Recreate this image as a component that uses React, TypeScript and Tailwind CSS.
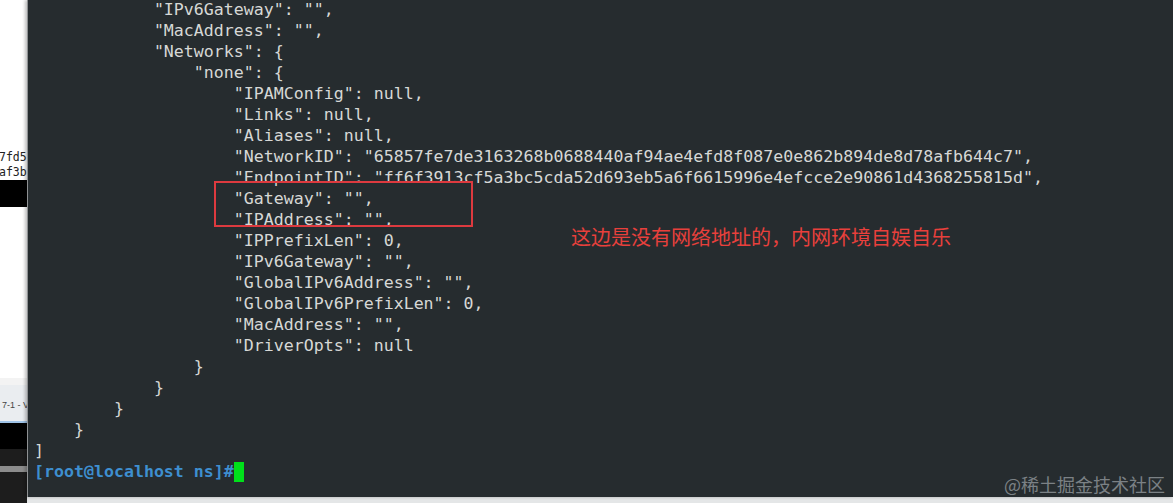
import React from "react";

const lines: string[] = [
  '            "IPv6Gateway": "",',
  '            "MacAddress": "",',
  '            "Networks": {',
  '                "none": {',
  '                    "IPAMConfig": null,',
  '                    "Links": null,',
  '                    "Aliases": null,',
  '                    "NetworkID": "65857fe7de3163268b0688440af94ae4efd8f087e0e862b894de8d78afb644c7",',
  '                    "EndpointID": "ff6f3913cf5a3bc5cda52d693eb5a6f6615996e4efcce2e90861d4368255815d",',
  '                    "Gateway": "",',
  '                    "IPAddress": "",',
  '                    "IPPrefixLen": 0,',
  '                    "IPv6Gateway": "",',
  '                    "GlobalIPv6Address": "",',
  '                    "GlobalIPv6PrefixLen": 0,',
  '                    "MacAddress": "",',
  '                    "DriverOpts": null',
  "                }",
  "            }",
  "        }",
  "    }",
  "]",
];

export default function App() {
  return (
    <div className="flex w-[1173px] h-[503px] overflow-hidden bg-white">
      {/* left strip: neighbouring window fragments */}
      <div className="flex flex-col w-[27px] shrink-0 overflow-hidden">
        <div className="h-[150px] bg-white" />
        <div className="h-[30px] bg-white flex flex-col justify-start overflow-hidden">
          <div className="whitespace-pre text-[11.5px] leading-[15px] text-[#222] [font-family:'DejaVu_Sans_Mono',monospace] -ml-[1px]">
            7fd5
          </div>
          <div className="whitespace-pre text-[11.5px] leading-[15px] text-[#222] [font-family:'DejaVu_Sans_Mono',monospace] -ml-[1px]">
            af3b
          </div>
        </div>
        <div className="h-[27px] bg-black" />
        <div className="h-[171px] bg-white" />
        <div className="h-[7px] bg-[#f3f3f3]" />
        <div className="h-[36px] bg-[#eaedf0] flex items-center overflow-hidden">
          <span className="whitespace-pre text-[9px] text-[#444] [font-family:'Liberation_Sans',sans-serif] pl-[2px] pt-[6px]">
            7-1 - V
          </span>
        </div>
        <div className="h-[2px] bg-[#9fc3e6]" />
        <div className="h-[26px] bg-black" />
        <div className="h-[17px] bg-[#1d1d1d]" />
        <div className="h-[6px] bg-[#8c8c8c]" />
        <div className="flex-1 bg-[#1d1d1d]" />
      </div>

      {/* terminal */}
      <div className="flex flex-col flex-1 min-w-0">
        <div className="relative flex-1 bg-[#262c2f] border-l border-[#8e9193] shadow-[-2px_0_3px_rgba(0,0,0,0.25)] overflow-hidden">
          <div className="pl-[6px] -mt-[1px] [font-family:'DejaVu_Sans_Mono',monospace] text-[16.6px] leading-[21px] text-[#d6d8d6] whitespace-pre">
            {lines.map((l, i) => (
              <div key={i}>{l}</div>
            ))}
            <div className="flex items-center">
              <span className="font-bold text-[#3e8fd0]">[root@localhost ns]#</span>
              <span className="inline-block w-[10px] h-[20px] bg-[#00e01a]" />
            </div>
          </div>

          {/* red annotation box */}
          <div className="absolute left-[186px] top-[181px] w-[259px] h-[46px] border-2 border-[#dd3a3f]" />

          {/* annotation text */}
          <div className="absolute left-[543px] top-[223px] text-[20px] leading-[28px] text-[#e8403c] [font-family:'Noto_Sans_CJK_SC',sans-serif] whitespace-nowrap">
            这边是没有网络地址的，内网环境自娱自乐
          </div>

          {/* watermark */}
          <div className="absolute right-[8px] bottom-[1px] text-[18px] leading-[24px] text-[#7b8185] [font-family:'Noto_Sans_CJK_SC',sans-serif] whitespace-nowrap">
            @稀土掘金技术社区
          </div>
        </div>
        <div className="h-[6px] bg-[#e4e6e7]" />
      </div>
    </div>
  );
}
